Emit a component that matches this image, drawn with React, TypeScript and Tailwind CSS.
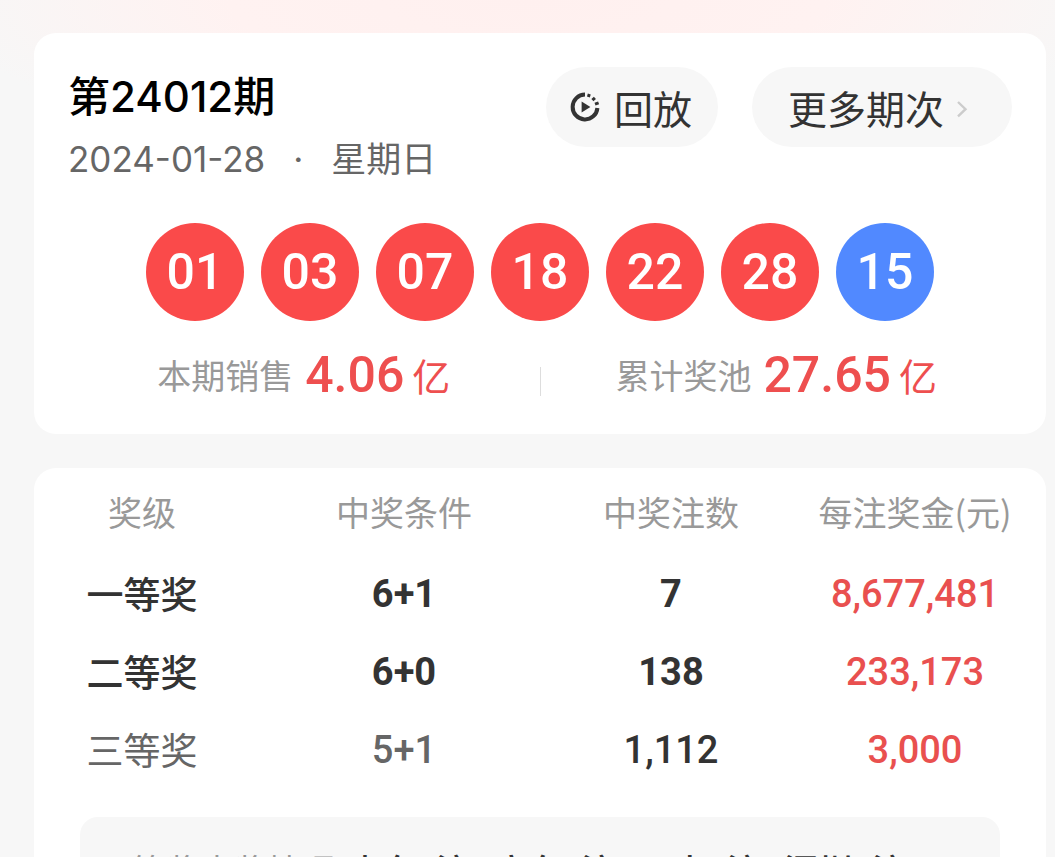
import React from 'react';

interface PrizeRow {
  level: string;
  condition: string;
  count: string;
  amount: string;
  levelClass: string;
  conditionClass: string;
  countClass: string;
}

const redBalls = ['01', '03', '07', '18', '22', '28'];
const blueBall = '15';

const prizes: PrizeRow[] = [
  {
    level: '一等奖',
    condition: '6+1',
    count: '7',
    amount: '8,677,481',
    levelClass: 'font-medium text-[#333333]',
    conditionClass: 'font-bold text-[#333333]',
    countClass: 'font-bold text-[#333333]',
  },
  {
    level: '二等奖',
    condition: '6+0',
    count: '138',
    amount: '233,173',
    levelClass: 'font-medium text-[#333333]',
    conditionClass: 'font-bold text-[#333333]',
    countClass: 'font-bold text-[#333333]',
  },
  {
    level: '三等奖',
    condition: '5+1',
    count: '1,112',
    amount: '3,000',
    levelClass: 'font-normal text-[#666666]',
    conditionClass: 'font-medium text-[#666666]',
    countClass: 'font-medium text-[#333333]',
  },
];

const regions = ['山东1注', '广东3注', '云南2注', '深圳1注'];

const ReplayIcon: React.FC = () => (
  <svg className="size-[30px] shrink-0" viewBox="0 0 30 30" fill="none" aria-hidden="true">
    <path d="M15 2.6A12.4 12.4 0 1 0 27.4 16" stroke="#333333" strokeWidth="4" />
    <path d="M18.4 5L19.3 2M22.4 8.2L24.9 5.8M25 12.2L28.6 10.9" stroke="#333333" strokeWidth="3" />
    <path d="M11.6 9.4L20.4 15L11.6 20.6Z" fill="#333333" />
  </svg>
);

const ChevronIcon: React.FC = () => (
  <svg className="mt-1 h-[18px] w-3 shrink-0" viewBox="0 0 12 18" fill="none" aria-hidden="true">
    <path d="M2 2L9.5 9.2L2 16.4" stroke="#cccccc" strokeWidth="2.4" />
  </svg>
);

const Ball: React.FC<{ value: string; blue?: boolean }> = ({ value, blue }) => (
  <li
    className={`flex size-[98px] items-center justify-center rounded-full font-[Roboto,sans-serif] text-[50px] font-medium text-white ${
      blue ? 'bg-[#5189ff]' : 'bg-[#fa4a4a]'
    }`}
  >
    {value}
  </li>
);

const Stat: React.FC<{ label: string; value: string }> = ({ label, value }) => (
  <div className="flex flex-1 items-center justify-center whitespace-nowrap leading-[60px]">
    <span className="text-[34px] text-[#999999]">{label}</span>
    <span className="ml-3 font-[Roboto,sans-serif] text-[50px] font-medium text-[#ee4f4f]">{value}</span>
    <span className="ml-2 text-[38px] text-[#ee4f4f]">亿</span>
  </div>
);

const App: React.FC = () => {
  return (
    <main className="h-screen overflow-hidden bg-[#f7f7f7] bg-[radial-gradient(ellipse_56%_160px_at_50%_0px,#fff0ef_0%,#fff2f1_50%,#f7f7f7_100%)] pt-[33px] pr-[9px] pl-[34px] font-['Noto_Sans_CJK_SC',sans-serif]">
      <section className="rounded-[22px] bg-white px-[34px] pt-[34px] pb-[29px]">
        <header className="flex items-start justify-between">
          <div className="whitespace-nowrap">
            <h1 className="font-[Inter,'Noto_Sans_CJK_SC',sans-serif] text-[42px] leading-[60px] font-medium text-black">
              第24012期
            </h1>
            <p className="mt-[2px] flex font-[Inter,'Noto_Sans_CJK_SC',sans-serif] text-[35px] leading-[60px] text-[#666666]">
              <time dateTime="2024-01-28">2024-01-28</time>
              <span className="mx-7">·</span>
              <span>星期日</span>
            </p>
          </div>
          <div className="flex gap-[34px] text-[39px] text-[#333333]">
            <button type="button" className="flex h-20 items-center gap-[14px] rounded-full bg-[#f7f7f7] pr-[26px] pl-6">
              <ReplayIcon />
              回放
            </button>
            <button type="button" className="flex h-20 items-center gap-3 rounded-full bg-[#f7f7f7] pr-11 pl-9">
              更多期次
              <ChevronIcon />
            </button>
          </div>
        </header>

        <ul className="mt-[34px] flex justify-center gap-[17px]">
          {redBalls.map((value) => (
            <Ball key={value} value={value} />
          ))}
          <Ball value={blueBall} blue />
        </ul>

        <div className="mt-6 flex items-center">
          <Stat label="本期销售" value="4.06" />
          <div className="mt-3 h-[29px] w-px bg-[#dddddd]" />
          <Stat label="累计奖池" value="27.65" />
        </div>
      </section>

      <section className="mt-[34px] rounded-t-[22px] bg-white pb-8">
        <table className="w-full table-fixed whitespace-nowrap text-center">
          <thead>
            <tr className="h-[87px] text-[34px] text-[#999999]">
              <th scope="col" className="w-[216px] font-normal">奖级</th>
              <th scope="col" className="font-normal">中奖条件</th>
              <th scope="col" className="w-[226px] font-normal">中奖注数</th>
              <th scope="col" className="w-[262px] font-normal">每注奖金(元)</th>
            </tr>
          </thead>
          <tbody>
            {prizes.map((row) => (
              <tr key={row.level} className="h-[78px] font-[Roboto,sans-serif] text-[38px]">
                <th
                  scope="row"
                  className={`font-['Noto_Sans_CJK_SC',sans-serif] text-[37px] ${row.levelClass}`}
                >
                  {row.level}
                </th>
                <td className={row.conditionClass}>{row.condition}</td>
                <td className={row.countClass}>{row.count}</td>
                <td className="font-medium text-[#e9504f]">{row.amount}</td>
              </tr>
            ))}
          </tbody>
        </table>

        <div className="mx-[46px] mt-7 flex rounded-[18px] bg-[#f7f7f7] px-[18px] py-[26px] text-[34px] leading-[54px] whitespace-nowrap">
          <span className="text-[#999999]">一等奖中奖情况</span>
          <ul className="ml-3 flex gap-6 font-medium text-[#333333]">
            {regions.map((region) => (
              <li key={region}>{region}</li>
            ))}
          </ul>
        </div>
      </section>
    </main>
  );
};

export default App;
